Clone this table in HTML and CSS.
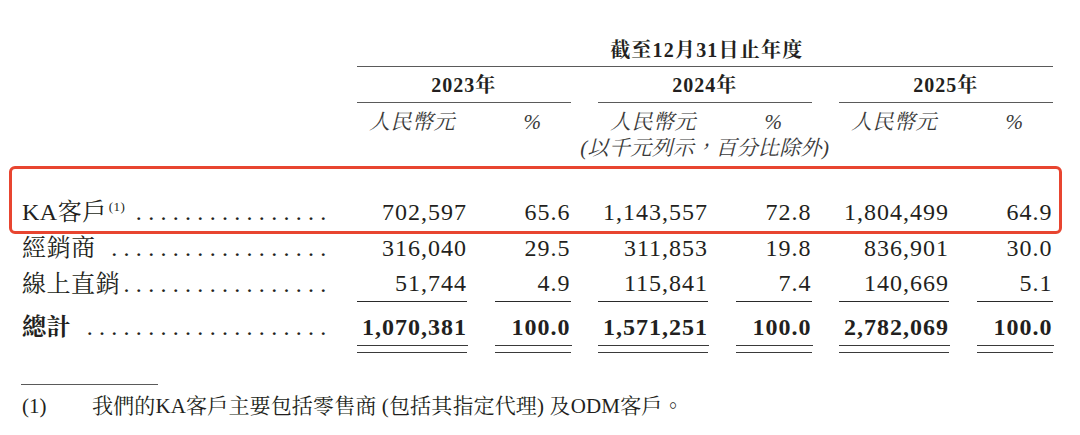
FILE: index.html
```html
<!DOCTYPE html>
<html lang="zh-Hant">
<head>
<meta charset="utf-8">
<title>收入按客戶類型劃分</title>
<link rel="stylesheet" href="styles.css">
</head>
<body>
<div class="page">
  <div class="table">
    <div class="row head-period">
      <div class="label"></div>
      <div class="period">截至12月31日止年度</div>
    </div>
    <div class="row head-year">
      <div class="label"></div>
      <div class="year">2023年</div>
      <div class="year">2024年</div>
      <div class="year">2025年</div>
    </div>
    <div class="row head-unit">
      <div class="label"></div>
      <div class="unit">人民幣元</div>
      <div class="unit">%</div>
      <div class="unit">人民幣元</div>
      <div class="unit">%</div>
      <div class="unit">人民幣元</div>
      <div class="unit">%</div>
    </div>
    <div class="row head-note">
      <div class="label"></div>
      <div class="spacer"></div>
      <div class="note"><span>(以千元列示，百分比除外)</span></div>
      <div class="spacer"></div>
    </div>

    <div class="row data">
      <div class="label"><span class="name">KA客戶<sup class="fn">(1)</sup></span><span class="dots">. . . . . . . . . . . . . . . .</span></div>
      <div class="num">702,597</div>
      <div class="num">65.6</div>
      <div class="num">1,143,557</div>
      <div class="num">72.8</div>
      <div class="num">1,804,499</div>
      <div class="num">64.9</div>
    </div>
    <div class="row data">
      <div class="label"><span class="name">經銷商</span><span class="dots">. . . . . . . . . . . . . . . . . .</span></div>
      <div class="num">316,040</div>
      <div class="num">29.5</div>
      <div class="num">311,853</div>
      <div class="num">19.8</div>
      <div class="num">836,901</div>
      <div class="num">30.0</div>
    </div>
    <div class="row data last">
      <div class="label"><span class="name">線上直銷</span><span class="dots">. . . . . . . . . . . . . . . . .</span></div>
      <div class="num">51,744</div>
      <div class="num">4.9</div>
      <div class="num">115,841</div>
      <div class="num">7.4</div>
      <div class="num">140,669</div>
      <div class="num">5.1</div>
    </div>
    <div class="row total">
      <div class="label"><span class="name">總計</span><span class="dots">. . . . . . . . . . . . . . . . . . . .</span></div>
      <div class="num"><span class="val">1,070,381</span></div>
      <div class="num"><span class="val">100.0</span></div>
      <div class="num"><span class="val">1,571,251</span></div>
      <div class="num"><span class="val">100.0</span></div>
      <div class="num"><span class="val">2,782,069</span></div>
      <div class="num"><span class="val">100.0</span></div>
    </div>
  </div>

  <div class="footnote-rule"></div>
  <div class="footnote">
    <span class="fn-mark">(1)</span>
    <span class="fn-text">我們的KA客戶主要包括零售商 (包括其指定代理) 及ODM客戶。</span>
  </div>

  <div class="highlight"></div>
</div>
</body>
</html>
```

FILE: styles.css
```css
html, body {
  margin: 0;
  padding: 0;
  background: #ffffff;
}

body {
  color: #231f20;
  font-family: "Liberation Serif", "Noto Serif CJK TC", "Noto Sans CJK TC", serif;
}

.page {
  position: relative;
  width: 1080px;
  height: 435px;
  overflow: hidden;
}

.table {
  margin-left: 22px;
}

.row {
  display: grid;
  grid-template-columns: 307.5px 110px 76px 110px 76px 110px 76px;
  column-gap: 27.5px;
}

/* ---------- header ---------- */
.period {
  grid-column: 2 / -1;
  box-sizing: border-box;
  height: 66.5px;
  padding-top: 38px;
  padding-left: 4px;
  line-height: 24px;
  font-size: 20px;
  font-weight: bold;
  letter-spacing: 1.2px;
  text-align: center;
  border-bottom: 1.5px solid #5a5a5a;
}

.year {
  grid-column: span 2;
  box-sizing: border-box;
  height: 36px;
  padding-top: 6.5px;
  line-height: 24px;
  font-size: 20px;
  font-weight: bold;
  letter-spacing: 1px;
  text-align: center;
  border-bottom: 1.5px solid #5a5a5a;
}

.unit {
  box-sizing: border-box;
  height: 32px;
  padding-top: 7.5px;
  line-height: 24px;
  font-size: 21px;
  font-style: italic;
  text-align: center;
  letter-spacing: 0.5px;
  color: #3a3a3a;
}

.head-note .spacer {
  grid-column: span 2;
}

.note {
  grid-column: span 2;
  display: flex;
  justify-content: center;
  box-sizing: border-box;
  height: 59.5px;
  padding-top: 1.5px;
  line-height: 24px;
  font-size: 21px;
  font-style: italic;
  white-space: nowrap;
  color: #3a3a3a;
  letter-spacing: 0.3px;
}

/* ---------- body rows ---------- */
.label {
  display: flex;
  align-items: baseline;
  white-space: nowrap;
}

.data .label,
.total .label {
  font-size: 24px;
  line-height: 36px;
}

.name {
  letter-spacing: 0.5px;
}

.fn {
  font-size: 13px;
  vertical-align: 9px;
  line-height: 0;
  margin-left: 2px;
}

.dots {
  margin-left: auto;
  padding-right: 3px;
  letter-spacing: 0.15px;
  font-family: "Liberation Serif", serif;
  font-weight: normal;
}

.num {
  font-size: 24px;
  text-align: right;
  letter-spacing: 1px;
  white-space: nowrap;
}

.data .num {
  height: 36px;
  line-height: 36px;
}

.data.last .num {
  height: 34.5px;
  line-height: 34.5px;
  border-bottom: 1.5px solid #2a2a2a;
}

.total .label {
  padding-top: 7px;
  font-weight: bold;
}

.total .num {
  padding-top: 7px;
  padding-bottom: 5.5px;
  border-bottom: 1.5px solid #3a3a3a;
  font-weight: bold;
}

.total .val {
  display: block;
  line-height: 36px;
  margin-right: -1px;
  padding-right: 1px;
  border-bottom: 1.5px solid #3a3a3a;
}

/* ---------- footnote ---------- */
.footnote-rule {
  width: 137px;
  margin-left: 21px;
  margin-top: 31.5px;
  border-top: 1.5px solid #5a5a5a;
}

.footnote {
  display: flex;
  padding-left: 22px;
  padding-top: 8.5px;
  line-height: 24px;
  font-size: 21px;
  white-space: nowrap;
}

.fn-mark {
  width: 70px;
  flex: none;
}

.fn-text {
  letter-spacing: 0.15px;
}

/* ---------- annotation ---------- */
.highlight {
  position: absolute;
  left: 9px;
  top: 166px;
  width: 1053px;
  height: 68px;
  box-sizing: border-box;
  border: 3px solid #e84530;
  border-radius: 6px;
  pointer-events: none;
}
```
